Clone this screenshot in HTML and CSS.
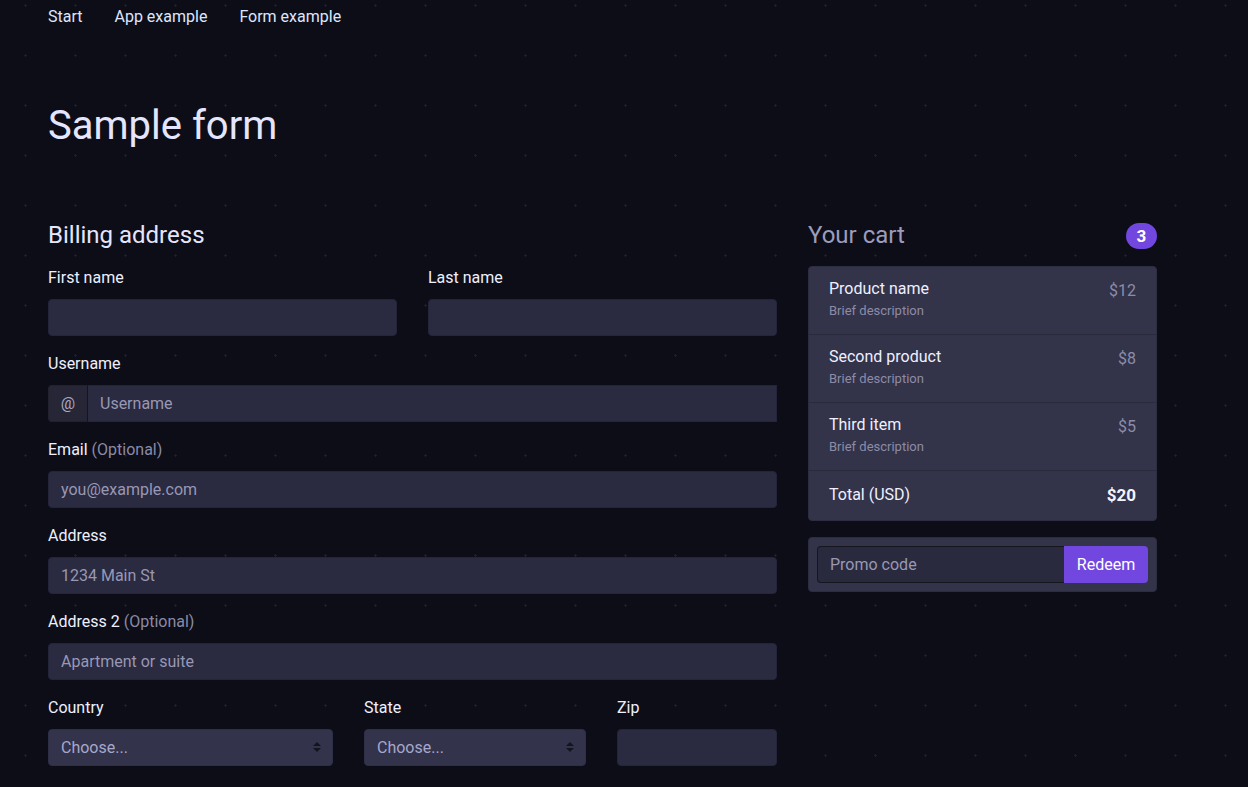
FILE: index.html
```html
<!DOCTYPE html>
<html lang="en">
<head>
<meta charset="utf-8">
<title>Sample form</title>
<link rel="stylesheet" href="styles.css">
</head>
<body>
<nav class="topnav">
  <a href="#">Start</a>
  <a href="#">App example</a>
  <a href="#">Form example</a>
</nav>
<main class="page">
  <h1 class="title">Sample form</h1>
  <div class="layout">
    <section class="billing">
      <h2 class="section-title">Billing address</h2>
      <div class="row two">
        <div class="field">
          <label class="label">First name</label>
          <input class="input" type="text">
        </div>
        <div class="field">
          <label class="label">Last name</label>
          <input class="input" type="text">
        </div>
      </div>
      <div class="field">
        <label class="label">Username</label>
        <div class="group">
          <span class="addon">@</span>
          <input class="input group-input" type="text" placeholder="Username">
        </div>
      </div>
      <div class="field">
        <label class="label">Email <span class="muted">(Optional)</span></label>
        <input class="input" type="text" placeholder="you@example.com">
      </div>
      <div class="field">
        <label class="label">Address</label>
        <input class="input" type="text" placeholder="1234 Main St">
      </div>
      <div class="field">
        <label class="label">Address 2 <span class="muted">(Optional)</span></label>
        <input class="input" type="text" placeholder="Apartment or suite">
      </div>
      <div class="row three">
        <div class="field">
          <label class="label">Country</label>
          <div class="select-wrap">
            <select class="select"><option>Choose...</option></select>
            <svg class="caret" width="8" height="12" viewBox="0 0 8 12"><path d="M0 5 L4 1 L8 5 Z M0 7 L4 11 L8 7 Z" fill="#14141f"/></svg>
          </div>
        </div>
        <div class="field">
          <label class="label">State</label>
          <div class="select-wrap">
            <select class="select"><option>Choose...</option></select>
            <svg class="caret" width="8" height="12" viewBox="0 0 8 12"><path d="M0 5 L4 1 L8 5 Z M0 7 L4 11 L8 7 Z" fill="#14141f"/></svg>
          </div>
        </div>
        <div class="field">
          <label class="label">Zip</label>
          <input class="input" type="text">
        </div>
      </div>
    </section>
    <aside class="cart">
      <div class="cart-head">
        <h2 class="section-title cart-title">Your cart</h2>
        <span class="badge">3</span>
      </div>
      <ul class="list">
        <li class="item">
          <div>
            <div class="item-name">Product name</div>
            <div class="item-desc">Brief description</div>
          </div>
          <span class="price">$12</span>
        </li>
        <li class="item">
          <div>
            <div class="item-name">Second product</div>
            <div class="item-desc">Brief description</div>
          </div>
          <span class="price">$8</span>
        </li>
        <li class="item">
          <div>
            <div class="item-name">Third item</div>
            <div class="item-desc">Brief description</div>
          </div>
          <span class="price">$5</span>
        </li>
        <li class="item total">
          <span>Total (USD)</span>
          <strong>$20</strong>
        </li>
      </ul>
      <form class="promo">
        <input class="promo-input" type="text" placeholder="Promo code">
        <button class="promo-btn" type="button">Redeem</button>
      </form>
    </aside>
  </div>
</main>
</body>
</html>
```

FILE: styles.css
```css
* { box-sizing: border-box; }
html, body { margin: 0; padding: 0; }
body {
  background-color: #0d0d17;
  background-image: radial-gradient(circle at 25.5px 5.5px, #21212e 0.9px, transparent 1.4px);
  background-size: 50px 50px;
  color: #e6e8ff;
  font-family: Roboto, "Liberation Sans", Arial, sans-serif;
  font-size: 16px;
  line-height: 24px;
  min-height: 787px;
}
.topnav {
  display: flex;
  gap: 32px;
  padding: 5px 48px 4px;
}
.topnav a {
  color: #dde6ff;
  text-decoration: none;
  font-size: 16px;
  line-height: 24px;
}
.page { padding: 0 48px; }
.title {
  margin: 69px 0 0;
  font-size: 40px;
  line-height: 48px;
  font-weight: 400;
  color: #e4e6ff;
}
.layout {
  display: flex;
  gap: 31px;
  margin-top: 71px;
  align-items: flex-start;
}
.billing { width: 729px; }
.cart { width: 349px; }
.section-title {
  margin: 0 0 16px;
  font-size: 24px;
  line-height: 29px;
  font-weight: 400;
  color: #e4e6ff;
}
.row { display: grid; gap: 31px; }
.row.two { grid-template-columns: 349px 349px; }
.row.three { grid-template-columns: 285px 222px 160px; }
.field { margin-bottom: 16px; }
.label {
  display: block;
  margin-bottom: 9px;
  font-size: 16px;
  line-height: 24px;
  color: #eef0ff;
}
.muted { color: #8a8aa6; }
.input {
  display: block;
  width: 100%;
  height: 37px;
  margin: 0;
  padding: 0 12px;
  border: 1px solid #24243a;
  border-radius: 4px;
  background: #2a2a40;
  color: #e6e8ff;
  font-family: inherit;
  font-size: 16px;
  outline: none;
}
.input::placeholder, .promo-input::placeholder { color: #9898b4; opacity: 1; }
.group { display: flex; }
.addon {
  width: 40px;
  height: 37px;
  display: flex;
  align-items: center;
  justify-content: center;
  background: #262636;
  border: 1px solid #22222f;
  border-right: 1px solid #15151f;
  border-radius: 4px 0 0 4px;
  color: #a8a8c0;
  font-size: 16px;
}
.group-input { flex: 1; border-radius: 0; border-left: 0; }
.select-wrap { position: relative; }
.select {
  display: block;
  width: 100%;
  height: 37px;
  padding: 0 12px;
  border: 1px solid #2e2e46;
  border-radius: 4px;
  background: #33334b;
  color: #a6a8cc;
  font-family: inherit;
  font-size: 16px;
  appearance: none;
  -webkit-appearance: none;
  outline: none;
}
.caret {
  position: absolute;
  right: 12px;
  top: 12px;
  pointer-events: none;
}
.cart-head {
  display: flex;
  justify-content: space-between;
  align-items: flex-start;
}
.cart-title { color: #9c9cbc; }
.badge {
  margin-top: 2px;
  min-width: 31px;
  height: 26px;
  padding: 0 9px;
  border-radius: 13px;
  background: #7147e0;
  color: #ffffff;
  font-weight: 700;
  font-size: 17px;
  line-height: 26px;
  text-align: center;
}
.list {
  list-style: none;
  margin: 0 0 16px;
  padding: 0;
  background: #33334a;
  border: 1px solid #2d2d42;
  border-radius: 4px;
}
.item {
  display: flex;
  justify-content: space-between;
  align-items: flex-start;
  padding: 11px 20px 13px;
  border-bottom: 1px solid #2a2a3c;
}
.item-name { font-size: 16px; line-height: 22px; color: #eef0ff; }
.item-desc { font-size: 13px; line-height: 21px; color: #8c8ca8; }
.price { font-size: 16px; line-height: 26px; color: #8c8ca8; }
.item.total {
  border-bottom: 0;
  padding: 12px 20px 13px;
  align-items: center;
  color: #eef0ff;
}
.item.total strong { font-weight: 700; font-size: 17px; color: #f2f4ff; }
.promo {
  display: flex;
  margin: 0;
  padding: 8px;
  background: #33334a;
  border: 1px solid #2d2d42;
  border-radius: 4px;
}
.promo-input {
  flex: 1;
  min-width: 0;
  height: 37px;
  padding: 0 12px;
  border: 1px solid #16161f;
  border-right: 0;
  border-radius: 4px 0 0 4px;
  background: #2a2a3e;
  color: #e6e8ff;
  font-family: inherit;
  font-size: 16px;
  outline: none;
}
.promo-btn {
  width: 84px;
  height: 37px;
  border: 0;
  border-radius: 0 4px 4px 0;
  background: #7147e0;
  color: #ffffff;
  font-family: inherit;
  font-size: 16px;
  cursor: pointer;
}
```
